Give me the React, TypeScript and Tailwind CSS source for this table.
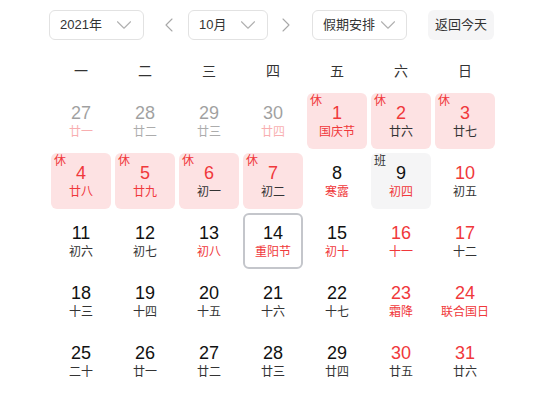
import { ChevronDown, ChevronLeft, ChevronRight } from "lucide-react";

type Day = {
  n: number;
  lunar: string;
  red?: boolean;
  lunarRed?: boolean;
  tag?: "休" | "班";
  other?: boolean;
  today?: boolean;
};

const weekdays = ["一", "二", "三", "四", "五", "六", "日"];

const days: Day[] = [
  { n: 27, lunar: "廿一", lunarRed: true, other: true },
  { n: 28, lunar: "廿二", other: true },
  { n: 29, lunar: "廿三", other: true },
  { n: 30, lunar: "廿四", lunarRed: true, other: true },
  { n: 1, lunar: "国庆节", red: true, lunarRed: true, tag: "休" },
  { n: 2, lunar: "廿六", red: true, tag: "休" },
  { n: 3, lunar: "廿七", red: true, tag: "休" },
  { n: 4, lunar: "廿八", red: true, lunarRed: true, tag: "休" },
  { n: 5, lunar: "廿九", red: true, lunarRed: true, tag: "休" },
  { n: 6, lunar: "初一", red: true, tag: "休" },
  { n: 7, lunar: "初二", red: true, tag: "休" },
  { n: 8, lunar: "寒露", lunarRed: true },
  { n: 9, lunar: "初四", lunarRed: true, tag: "班" },
  { n: 10, lunar: "初五", red: true },
  { n: 11, lunar: "初六" },
  { n: 12, lunar: "初七" },
  { n: 13, lunar: "初八", lunarRed: true },
  { n: 14, lunar: "重阳节", lunarRed: true, today: true },
  { n: 15, lunar: "初十", lunarRed: true },
  { n: 16, lunar: "十一", red: true, lunarRed: true },
  { n: 17, lunar: "十二", red: true },
  { n: 18, lunar: "十三" },
  { n: 19, lunar: "十四" },
  { n: 20, lunar: "十五" },
  { n: 21, lunar: "十六" },
  { n: 22, lunar: "十七" },
  { n: 23, lunar: "霜降", red: true, lunarRed: true },
  { n: 24, lunar: "联合国日", red: true, lunarRed: true },
  { n: 25, lunar: "二十" },
  { n: 26, lunar: "廿一" },
  { n: 27, lunar: "廿二" },
  { n: 28, lunar: "廿三" },
  { n: 29, lunar: "廿四" },
  { n: 30, lunar: "廿五", red: true },
  { n: 31, lunar: "廿六", red: true },
];

const Select = ({ label, width }: { label: string; width: string }) => (
  <div
    className={`${width} h-[30px] flex items-center justify-between pl-[10px] pr-[6px] border border-[#e2e2e2] rounded-[6px] text-[13px] text-[#333]`}
  >
    <span className="whitespace-nowrap">{label}</span>
    <ChevronDown size={26} strokeWidth={1} className="shrink-0 text-[#b0b0b0]" />
  </div>
);

const Cell = ({ day }: { day: Day }) => {
  let box = "bg-white";
  if (day.tag === "休") box = "bg-[#fde2e3]";
  if (day.tag === "班") box = "bg-[#f5f5f6]";
  if (day.today) box = "bg-white border-2 border-[#c4c6cb]";

  return (
    <div className="h-[60px] p-[2px]">
      <div
        className={`relative h-full rounded-[6px] flex flex-col items-center justify-center ${box} ${
          day.other ? "opacity-40" : ""
        }`}
      >
        {day.tag && (
          <span
            className={`absolute left-[3px] top-[0px] text-[12px] leading-[16px] ${
              day.tag === "休" ? "text-[#f0383b]" : "text-[#333]"
            }`}
          >
            {day.tag}
          </span>
        )}
        <span
          className={`text-[18px] leading-[22px] ${
            day.red ? "text-[#f0383b]" : "text-[#111]"
          }`}
        >
          {day.n}
        </span>
        <span
          className={`text-[12px] leading-[16px] ${
            day.lunarRed ? "text-[#f0383b]" : "text-[#333]"
          }`}
        >
          {day.lunar}
        </span>
      </div>
    </div>
  );
};

export default function App() {
  return (
    <div
      className="w-[552px] h-[398px] bg-white overflow-hidden"
      style={{ fontFamily: "Arial, 'Liberation Sans', 'Noto Sans CJK SC', sans-serif" }}
    >
      <div className="flex items-center pt-[10px] pl-[49px] h-[40px]">
        <Select label="2021年" width="w-[95px]" />
        <div className="ml-[13px] w-[24px] flex justify-center text-[#a8a8a8]">
          <ChevronLeft size={26} strokeWidth={1.1} />
        </div>
        <div className="ml-[7px]">
          <Select label="10月" width="w-[80px]" />
        </div>
        <div className="ml-[6px] w-[24px] flex justify-center text-[#a8a8a8]">
          <ChevronRight size={26} strokeWidth={1.1} />
        </div>
        <div className="ml-[14px]">
          <Select label="假期安排" width="w-[95px]" />
        </div>
        <button className="ml-[21px] h-[30px] w-[66px] rounded-[6px] bg-[#f5f5f6] text-[13px] text-[#333] whitespace-nowrap">
          返回今天
        </button>
      </div>

      <div className="ml-[49px] w-[448px] mt-[12px]">
        <div className="grid grid-cols-7 h-[39px] items-center text-[14px] text-[#333]">
          {weekdays.map((w) => (
            <div key={w} className="text-center">
              {w}
            </div>
          ))}
        </div>
        <div className="grid grid-cols-7">
          {days.map((d, i) => (
            <Cell key={i} day={d} />
          ))}
        </div>
      </div>
    </div>
  );
}
